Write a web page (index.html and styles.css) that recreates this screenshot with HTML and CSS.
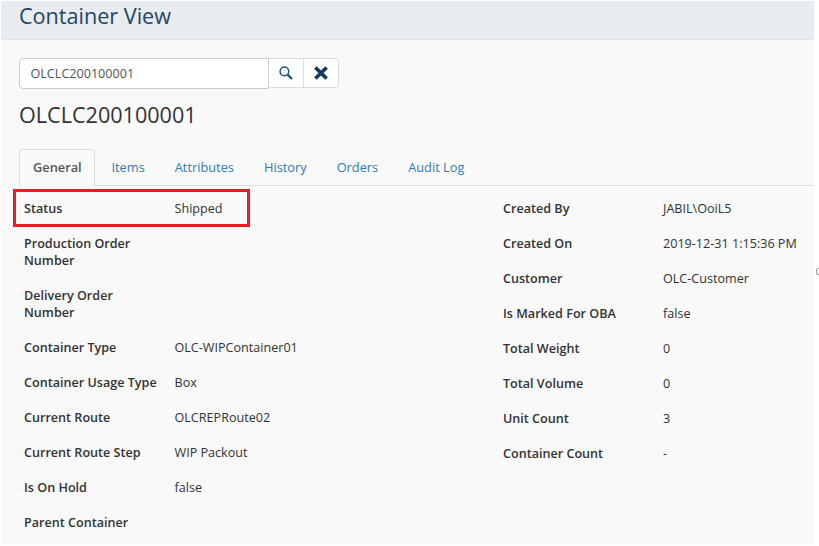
FILE: index.html
```html
<!DOCTYPE html>
<html>
<head lang="en">
    <meta charset="UTF-8">
    <title>Container View</title>
    <link rel="stylesheet" href="styles.css">
</head>
<body>
    <div class="page">
        <div class="page-head">
            <h1>Container View</h1>
        </div>
        <div class="content">
            <div class="search">
                <input class="search-input" type="text" value="OLCLC200100001">
                <button class="search-btn" type="button">
                    <svg width="16" height="16" viewBox="0 0 16 16"><circle cx="6.4" cy="6.4" r="4.3" fill="none" stroke="#1d527f" stroke-width="1.5"/><path d="M9.6 9.6l4.4 4.4" stroke="#1d527f" stroke-width="2.2" fill="none"/></svg>
                </button>
                <button class="search-btn clear-btn" type="button">
                    <svg width="16" height="16" viewBox="0 0 16 16"><path d="M2.4 2.4L13.6 13.6M13.6 2.4L2.4 13.6" stroke="#12395f" stroke-width="3.6" fill="none"/></svg>
                </button>
            </div>
            <h2 class="title">OLCLC200100001</h2>
            <ul class="tabs">
                <li class="tab current">General</li>
                <li class="tab">Items</li>
                <li class="tab">Attributes</li>
                <li class="tab">History</li>
                <li class="tab">Orders</li>
                <li class="tab">Audit Log</li>
            </ul>
            <div class="details">
                <div class="col col-left">
                    <div class="row highlight"><span class="label">Status</span><span class="value">Shipped</span></div>
                    <div class="row tall"><span class="label">Production Order Number</span><span class="value"></span></div>
                    <div class="row tall"><span class="label">Delivery Order Number</span><span class="value"></span></div>
                    <div class="row"><span class="label">Container Type</span><span class="value">OLC-WIPContainer01</span></div>
                    <div class="row"><span class="label">Container Usage Type</span><span class="value">Box</span></div>
                    <div class="row"><span class="label">Current Route</span><span class="value">OLCREPRoute02</span></div>
                    <div class="row"><span class="label">Current Route Step</span><span class="value">WIP Packout</span></div>
                    <div class="row"><span class="label">Is On Hold</span><span class="value">false</span></div>
                    <div class="row"><span class="label">Parent Container</span><span class="value"></span></div>
                </div>
                <div class="col col-right">
                    <div class="row"><span class="label">Created By</span><span class="value">JABIL\OoiL5</span></div>
                    <div class="row"><span class="label">Created On</span><span class="value">2019-12-31 1:15:36 PM</span></div>
                    <div class="row"><span class="label">Customer</span><span class="value">OLC-Customer</span></div>
                    <div class="row"><span class="label">Is Marked For OBA</span><span class="value">false</span></div>
                    <div class="row"><span class="label">Total Weight</span><span class="value">0</span></div>
                    <div class="row"><span class="label">Total Volume</span><span class="value">0</span></div>
                    <div class="row"><span class="label">Unit Count</span><span class="value">3</span></div>
                    <div class="row"><span class="label">Container Count</span><span class="value">-</span></div>
                </div>
            </div>
        </div>
    </div>
    <div class="edge-handle"></div>
</body>
</html>
```
FILE: styles.css
```css
* {
    margin: 0;
    padding: 0;
    box-sizing: border-box;
}
html, body {
    height: 100%;
    background-color: #fff;
    overflow: hidden;
}
body {
    font-family: "Open Sans", "Noto Sans", sans-serif;
    font-size: 12.6px;
    color: #333;
}
.page {
    width: 813px;
    height: 544px;
    margin: 1px 0 0 1px;
    background-color: #f9f9f9;
}
.page-head {
    height: 39px;
    background-color: #e8ebef;
    border-bottom: 1px solid #dfe2e6;
    padding-left: 18px;
}
.page-head h1 {
    font-size: 21.6px;
    font-weight: 400;
    line-height: 30px;
    color: #214565;
}
.content {
    padding: 18px 0 0 18px;
}
.search {
    display: flex;
    align-items: flex-start;
}
.search-input {
    width: 250px;
    height: 31px;
    border: 1px solid #ccc;
    border-radius: 4px 0 0 4px;
    padding-left: 10.5px;
    font-family: inherit;
    font-size: 12.6px;
    color: #555;
    background-color: #fff;
}
.search-btn {
    width: 35px;
    height: 30px;
    border: 1px solid #ddd;
    border-left: 0;
    background-color: #fff;
    display: flex;
    align-items: center;
    justify-content: center;
}
.clear-btn {
    border-radius: 0 4px 4px 0;
}
.title {
    font-size: 21.6px;
    font-weight: 400;
    line-height: 30px;
    margin-top: 11px;
    color: #333;
}
.tabs {
    list-style-type: none;
    display: flex;
    height: 37px;
    margin-top: 19px;
    border-bottom: 1px solid #ddd;
}
.tab {
    padding: 0 13px;
    font-size: 12.8px;
    line-height: 35px;
    color: #337ab7;
    margin-right: 2px;
    border: 1px solid transparent;
    border-bottom: 0;
}
.tab.current {
    color: #555;
    font-weight: 600;
    padding-right: 12.8px;
    background-color: #f9f9f9;
    border-color: #ddd;
    border-radius: 4px 4px 0 0;
    height: 37px;
}
.details {
    display: flex;
}
.col-left {
    width: 479px;
}
.col {
    padding-left: 5px;
}
.row {
    display: flex;
    padding: 14px 0 0;
    line-height: 17px;
    min-height: 35px;
}
.row.tall {
    min-height: 52px;
}
.label {
    width: 150.5px;
    padding-right: 10px;
    font-weight: 600;
    flex: none;
}
.col-right .label {
    width: 160px;
}
.highlight {
    position: relative;
}
.highlight::after {
    content: "";
    position: absolute;
    left: -11px;
    top: 3px;
    width: 231px;
    height: 32px;
    border: 3px solid #ed1c24;
}
.edge-handle {
    position: absolute;
    left: 816px;
    top: 268px;
    width: 6px;
    height: 7px;
    border: 1px solid #999;
    border-radius: 2px;
}
```
